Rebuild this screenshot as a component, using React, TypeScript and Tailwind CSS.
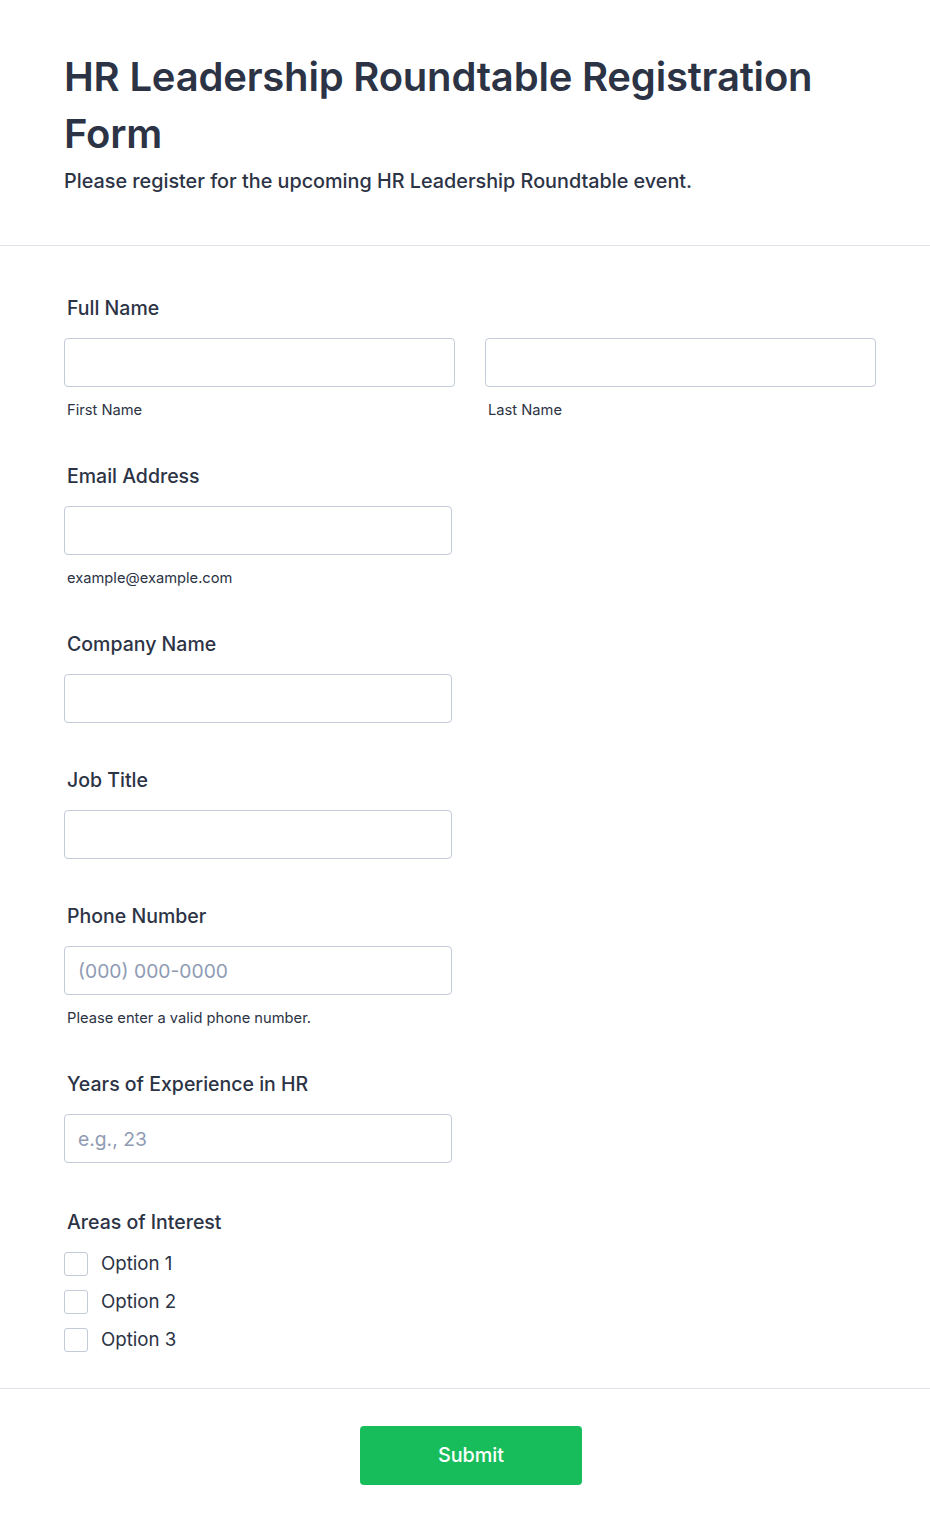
import React from "react";

const font = { fontFamily: "Inter, 'Noto Sans', sans-serif" };

function Label({ children }: { children: React.ReactNode }) {
  return (
    <div className="ml-[3px] h-[22px] text-[19.5px] leading-[22px] font-medium text-[#2c3345]">
      {children}
    </div>
  );
}

function Input({ placeholder, w = "w-[388px]" }: { placeholder?: string; w?: string }) {
  return (
    <input
      placeholder={placeholder}
      className={`${w} h-[49px] rounded-[4px] border border-[#c3cad8] bg-white px-[13px] text-[19.3px] text-[#2c3345] placeholder:text-[#8f9bb3] outline-none`}
      style={font}
    />
  );
}

function Sub({ children }: { children: React.ReactNode }) {
  return (
    <div className="ml-[3px] mt-[14px] h-[18px] text-[14.7px] leading-[18px] text-[#2c3345]">
      {children}
    </div>
  );
}

export default function App() {
  return (
    <div className="min-h-[1535px] w-[930px] bg-white" style={font}>
      <div className="border-b border-[#e2e3ea] px-[64px] pt-[48px] pb-[51px]">
        <h1 className="text-[40px] leading-[57px] font-semibold text-[#2c3345] tracking-[-0.2px]">
          HR Leadership Roundtable Registration Form
        </h1>
        <p className="mt-[6px] text-[19.8px] leading-[26px] font-medium text-[#2c3345]">
          Please register for the upcoming HR Leadership Roundtable event.
        </p>
      </div>

      <div className="px-[64px] pt-[51px] pb-[36px]">
        {/* Full Name */}
        <Label>Full Name</Label>
        <div className="mt-[19px] flex gap-[30px]">
          <div>
            <Input w="w-[391px]" />
            <Sub>First Name</Sub>
          </div>
          <div>
            <Input w="w-[391px]" />
            <Sub>Last Name</Sub>
          </div>
        </div>

        <div className="mt-[46px]">
          <Label>Email Address</Label>
          <div className="mt-[19px]">
            <Input />
          </div>
          <Sub>example@example.com</Sub>
        </div>

        <div className="mt-[46px]">
          <Label>Company Name</Label>
          <div className="mt-[19px]">
            <Input />
          </div>
        </div>

        <div className="mt-[46px]">
          <Label>Job Title</Label>
          <div className="mt-[19px]">
            <Input />
          </div>
        </div>

        <div className="mt-[46px]">
          <Label>Phone Number</Label>
          <div className="mt-[19px]">
            <Input placeholder="(000) 000-0000" />
          </div>
          <Sub>Please enter a valid phone number.</Sub>
        </div>

        <div className="mt-[46px]">
          <Label>Years of Experience in HR</Label>
          <div className="mt-[19px]">
            <Input placeholder="e.g., 23" />
          </div>
        </div>

        <div className="mt-[48px]">
          <Label>Areas of Interest</Label>
          <div className="mt-[19px] flex flex-col gap-[14px]">
            {["Option 1", "Option 2", "Option 3"].map((o) => (
              <label key={o} className="flex items-center gap-[13px] h-[24px]">
                <span className="h-[24px] w-[24px] rounded-[3px] border border-[#c3cad8] bg-white" />
                <span className="text-[18.7px] leading-[24px] text-[#2c3345]">{o}</span>
              </label>
            ))}
          </div>
        </div>
      </div>

      <div className="border-t border-[#e2e3ea] flex justify-center pt-[37px] pb-[50px]">
        <button
          className="ml-[12px] h-[59px] w-[222px] rounded-[4px] bg-[#18bd5b] text-[19.8px] font-medium text-white"
          style={font}
        >
          Submit
        </button>
      </div>
    </div>
  );
}
